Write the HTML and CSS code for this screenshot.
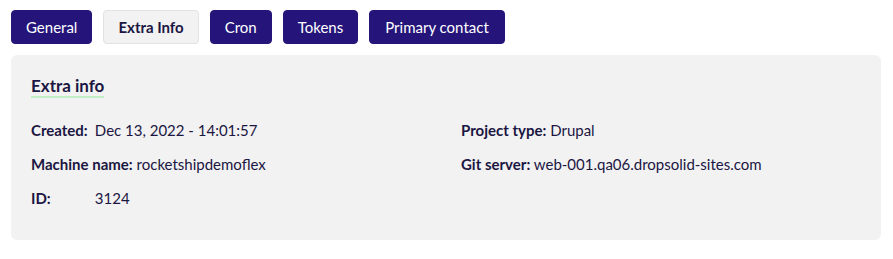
FILE: index.html
```html
<!DOCTYPE html>
<html lang="en">
<head>
    <meta charset="UTF-8" />
    <title>Project - Extra info</title>
    <link rel="stylesheet" href="styles.css">
</head>
<body>
    <div class="tabs">
        <button class="tab">General</button>
        <button class="tab active">Extra Info</button>
        <button class="tab">Cron</button>
        <button class="tab">Tokens</button>
        <button class="tab">Primary contact</button>
    </div>

    <div class="panel">
        <h2 class="panel-title"><span>Extra info</span></h2>
        <div class="info-grid">
            <div class="info-col">
                <p><span class="label">Created:</span> Dec 13, 2022 - 14:01:57</p>
                <p><span class="label">Machine name:</span> rocketshipdemoflex</p>
                <p><span class="label">ID:</span> 3124</p>
            </div>
            <div class="info-col">
                <p><span class="label">Project type:</span> Drupal</p>
                <p><span class="label">Git server:</span> web-001.qa06.dropsolid-sites.com</p>
            </div>
        </div>
    </div>
</body>
</html>
```

FILE: styles.css
```css
* {
    margin: 0; padding: 0; box-sizing: border-box;
    font-family: 'Lato', 'Noto Sans', sans-serif;
}
body {
    background: #fff;
    padding: 10px 11px;
    color: #1b1642;
}
.tabs {
    display: flex;
    gap: 11px;
    margin-bottom: 11px;
}
.tab {
    background: #25157a;
    color: #fff;
    border: 1px solid #25157a;
    border-radius: 4px;
    height: 34px;
    padding: 0 14px;
    font-size: 15px;
    cursor: pointer;
}
.tab:last-child {
    padding: 0 15px;
}
.tab.active {
    background: #f2f2f2;
    border-color: #e2e2e2;
    color: #1b1642;
    font-weight: bold;
}
.panel {
    background: #f2f2f2;
    border-radius: 6px;
    width: 870px;
    height: 185px;
    padding: 20px 20px;
}
.panel-title {
    font-size: 17px;
    font-weight: bold;
    margin-bottom: 24px;
}
.panel-title span {
    border-bottom: 2px solid #c3eec6;
}
.info-grid {
    display: grid;
    grid-template-columns: 430px 1fr;
}
.info-col p {
    font-size: 15px;
    line-height: 20px;
    margin-bottom: 14px;
}
.label {
    font-weight: bold;
    display: inline-block;
    min-width: 60px;
}
```
